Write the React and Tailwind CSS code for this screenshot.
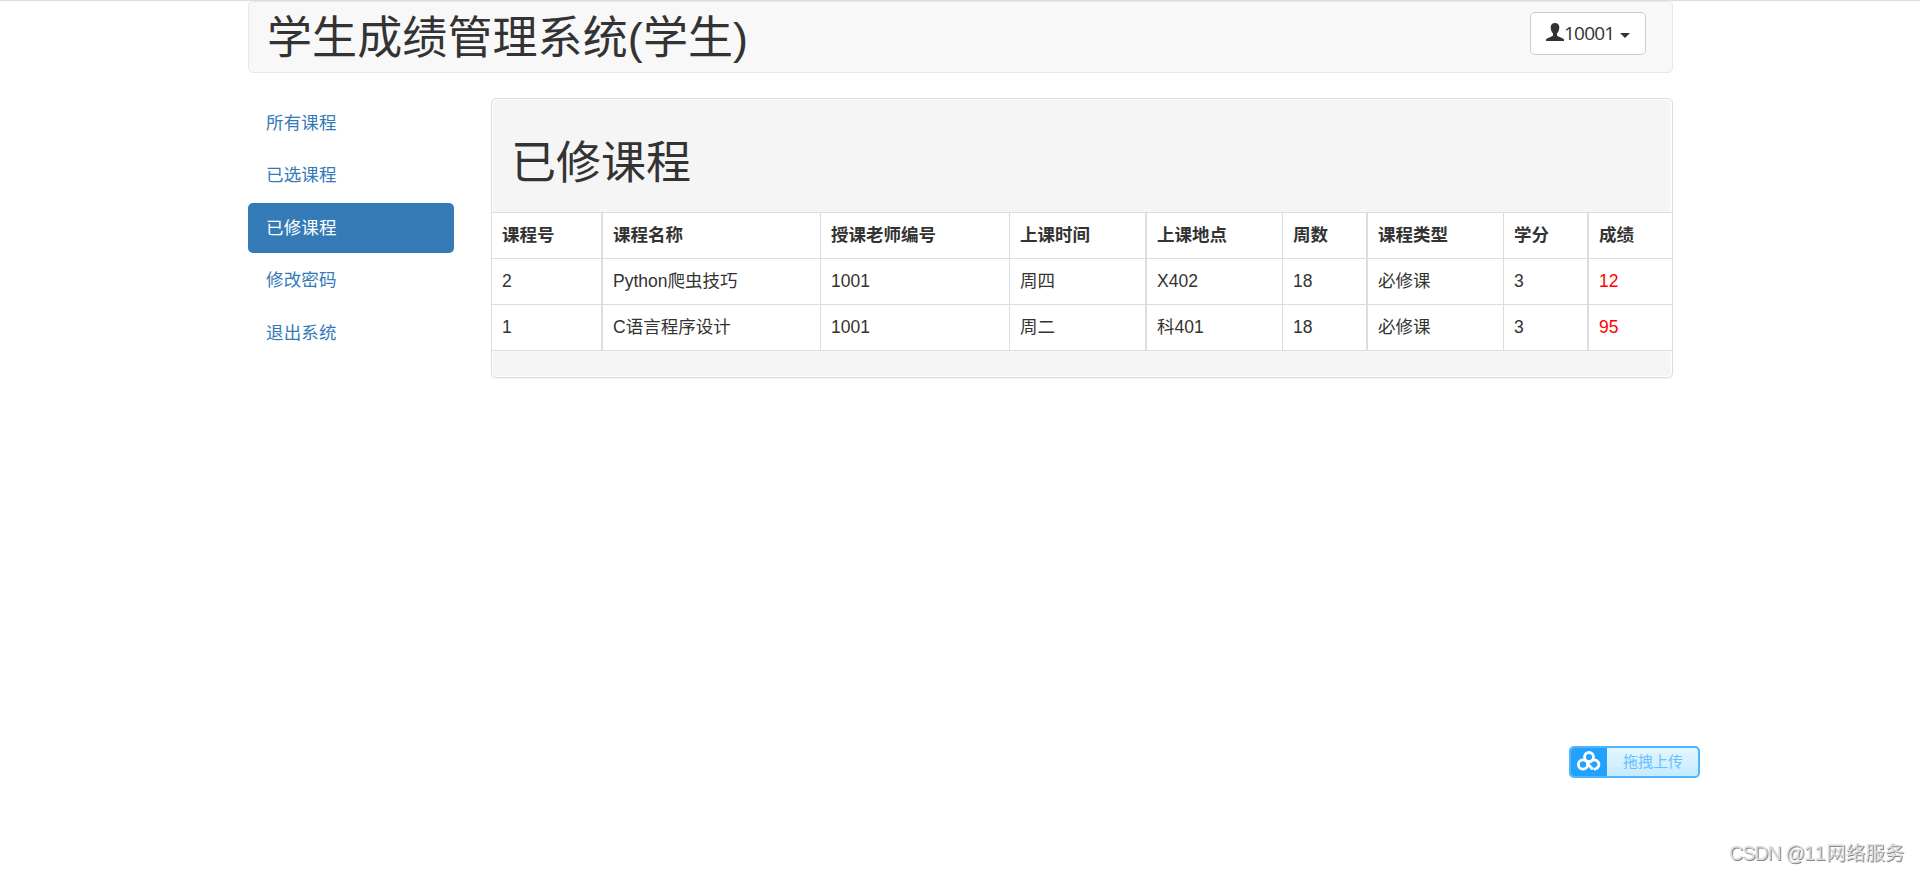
import { clsx } from 'clsx';

const menu = ['所有课程', '已选课程', '已修课程', '修改密码', '退出系统'];

const columns = [
  { key: 'id', label: '课程号', cell: 'w-[111px] border-r-2' },
  { key: 'name', label: '课程名称', cell: 'w-[218px] border-r' },
  { key: 'teacher', label: '授课老师编号', cell: 'w-[189px] border-r' },
  { key: 'time', label: '上课时间', cell: 'w-[137px] border-r-2' },
  { key: 'place', label: '上课地点', cell: 'w-[136px] border-r' },
  { key: 'weeks', label: '周数', cell: 'w-[85px] border-r-2' },
  { key: 'type', label: '课程类型', cell: 'w-[136px] border-r' },
  { key: 'credit', label: '学分', cell: 'w-[85px] border-r-2' },
  { key: 'score', label: '成绩', cell: '' },
];

const courses = [
  { id: '2', name: 'Python爬虫技巧', teacher: '1001', time: '周四', place: 'X402', weeks: '18', type: '必修课', credit: '3', score: '12' },
  { id: '1', name: 'C语言程序设计', teacher: '1001', time: '周二', place: '科401', weeks: '18', type: '必修课', credit: '3', score: '95' },
];

function Header() {
  return (
    <header className="flex h-[72px] items-start justify-between rounded-[5px] border border-[#e7e7e7] bg-[#f8f8f8] pl-[18px] pr-[26px]">
      <h1 className="pt-[12px] text-[45px] font-normal leading-[50px] tracking-[0.1px]">学生成绩管理系统(学生)</h1>
      <button className="mt-[10px] flex h-[43px] w-[116px] items-center rounded-[5px] border border-[#ccc] bg-white pl-[15px]">
        <svg className="mt-[-4px] h-[18px] w-[18px] shrink-0" viewBox="0 0 18 18" fill="#333" aria-hidden="true">
          <path d="M9 0C6.200 0 4.700 1.700 4.700 4.300c0 2.500.8 4.700 2.300 6.300v1.400c0 .6-.3 1-.9 1.300L1 15.600c-.7.300-1 .8-1 1.500V18h18v-.9c0-.7-.3-1.200-1-1.500l-5.100-2.300c-.6-.3-.9-.7-.9-1.300v-1.400c1.500-1.600 2.300-3.800 2.300-6.300C13.300 1.700 11.800 0 9 0z" />
        </svg>
        <span className="font-['Open_Sans','Noto_Sans_CJK_SC',sans-serif] text-[19px] leading-[25px] tracking-[-0.8px]">10001</span>
        <span className="ml-[6px] mt-[3px] border-x-[5px] border-t-[5px] border-x-transparent border-t-[#333]" />
      </button>
    </header>
  );
}

function Sidebar({ active }) {
  return (
    <nav className="flex w-[206px] shrink-0 flex-col gap-[2.5px]">
      {menu.map((item) => (
        <a
          key={item}
          className={clsx(
            'block h-[50px] rounded-[5px] px-[18px] py-[12.5px] leading-[25px] tracking-[0.15px]',
            item === active ? 'bg-[#337ab7] text-white' : 'text-[#337ab7]'
          )}
        >
          {item}
        </a>
      ))}
    </nav>
  );
}

function CourseTable() {
  return (
    <table className="w-full table-fixed border-separate border-spacing-0 bg-white">
      <thead>
        <tr>
          {columns.map((col) => (
            <th
              key={col.key}
              className={clsx('h-[47px] border-y border-[#ddd] pl-[10px] text-left font-bold leading-[25px]', col.cell)}
            >
              {col.label}
            </th>
          ))}
        </tr>
      </thead>
      <tbody>
        {courses.map((course) => (
          <tr key={course.id}>
            {columns.map((col) => (
              <td
                key={col.key}
                className={clsx(
                  'h-[46px] border-b border-[#ddd] pl-[10px] leading-[25px]',
                  col.cell,
                  col.key === 'score' && 'text-[#f00]'
                )}
              >
                {course[col.key]}
              </td>
            ))}
          </tr>
        ))}
      </tbody>
    </table>
  );
}

function UploadWidget() {
  return (
    <div className="absolute left-[1569px] top-[745px] flex h-[32px] w-[131px] overflow-hidden rounded-[5px] border-2 border-[#52b4fb] bg-linear-to-b from-[#e4f6ff] to-[#c5ebff]">
      <div className="-my-[2px] -ml-[2px] flex w-[38px] shrink-0 items-center justify-center bg-[#22a2ff]">
        <svg className="-mt-[2px] ml-[2px]" width="26" height="22" viewBox="0 0 26 22" fill="none" stroke="#fff" strokeWidth="2.800" strokeLinecap="round" aria-hidden="true">
          <circle cx="13" cy="7" r="4.500" />
          <circle cx="7" cy="14.500" r="4.600" />
          <path d="M14.500 11.800A4.600 4.600 0 1 1 19 19M11.500 12.500c1.200 2.700 2.600 4.600 4.500 6" />
        </svg>
      </div>
      <span className="flex-1 pl-px text-center text-[15px] leading-[28px] text-[#6cc0fb]">拖拽上传</span>
    </div>
  );
}

export default function App() {
  return (
    <div className="relative h-[872px] w-[1920px] overflow-hidden border-t border-[#ddd] bg-white font-['Liberation_Sans','Noto_Sans_CJK_SC',sans-serif] text-[17.5px] text-[#333]">
      <div className="ml-[248px] w-[1425px]">
        <Header />
        <div className="mt-[25px] flex justify-between">
          <Sidebar active="已修课程" />
          <main className="h-[280px] w-[1182px] rounded-[5px] border border-[#ddd] bg-[#f5f5f5] shadow-[0_1px_1px_rgba(0,0,0,0.05),inset_0_0_0_1px_#fff]">
            <h2 className="h-[113px] pl-[19px] pt-[40px] text-[45px] font-normal leading-[50px]">已修课程</h2>
            <CourseTable />
          </main>
        </div>
      </div>
      <UploadWidget />
      <div className="absolute left-[1729px] top-[838px] whitespace-nowrap text-[19.5px] leading-[28px] text-[#ddd] [text-shadow:1px_1px_0_#888]">
        <span className="tracking-[-0.9px]">CSDN @</span>
        <span className="tracking-[0.9px]">11</span>
        <span>网络服务</span>
      </div>
    </div>
  );
}
